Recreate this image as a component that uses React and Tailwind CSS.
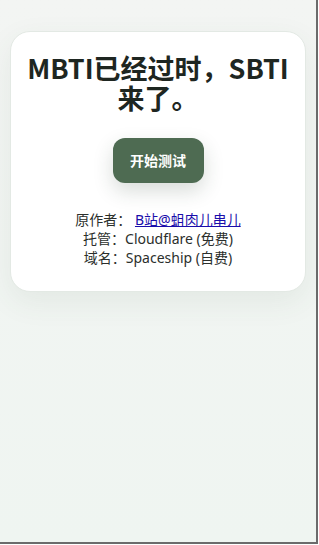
import React from 'react';

const App = () => {
  return (
    <div className="w-[319px] h-[545px] bg-white">
      <div
        className="w-[318px] h-[544px] border-r-2 border-b-2 border-[#6b6b6b] bg-gradient-to-b from-[#f3f5f3] to-[#eff5f1] px-[10px] pt-[31px]"
        style={{ fontFamily: '"Noto Sans", "Noto Sans CJK SC", sans-serif' }}
      >
        <div className="bg-white rounded-[20px] border border-[#e3e9e4] shadow-[0_10px_30px_rgba(60,90,70,0.08)] px-[8px] pt-[21px] pb-[24px] flex flex-col items-center">
          <h1
            className="text-[27px] leading-[30px] font-bold text-[#1e2621] text-center"
            style={{ fontFamily: '"Noto Sans CJK SC", sans-serif' }}
          >
            MBTI已经过时，SBTI来了。
          </h1>
          <button className="mt-[25px] w-[91px] h-[45px] rounded-[12px] bg-[#4e6b52] text-white text-[14px] font-bold shadow-[0_8px_20px_rgba(40,60,45,0.18)]">
            开始测试
          </button>
          <div className="mt-[27px] text-[14px] leading-[19px] text-[#2b2f2c] text-center">
            <div>
              原作者：{' '}
              <a href="#" className="text-[#1a0dab] underline">B站@蛆肉儿串儿</a>
            </div>
            <div>托管：Cloudflare (免费)</div>
            <div>域名：Spaceship (自费)</div>
          </div>
        </div>
      </div>
    </div>
  );
};

export default App;
